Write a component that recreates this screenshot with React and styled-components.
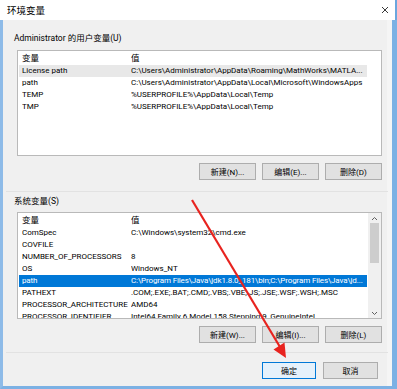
import React from "react";
import styled, { createGlobalStyle } from "styled-components";

const Global = createGlobalStyle`
  html, body { margin: 0; padding: 0; background: #fff; }
  body { font-family: Roboto, "Noto Sans CJK SC", sans-serif; }
`;

const FONT = `Roboto, "Noto Sans CJK SC", sans-serif`;

const Screen = styled.div`
  position: relative;
  width: 397px;
  height: 389px;
  overflow: hidden;
  background: #fff;
  display: flex;
  flex-direction: column;
  font-family: ${FONT};
  color: #000;
`;

const TitleBar = styled.div`
  height: 20px;
  flex: none;
  display: flex;
  align-items: center;
  justify-content: space-between;
  padding: 0 6px 0 7px;
  background: #fff;
  border-right: 2px solid #6aa6de;
  font-size: 9.5px;
`;

const Frame = styled.div`
  flex: 1;
  display: flex;
  border-left: 3px solid #8ebbe8;
  border-right: 5px solid #7cb1e4;
  border-bottom: 3px solid #7cb1e4;
`;

const Body = styled.div`
  flex: 1;
  background: #f0f0f0;
  padding: 12px 5px 0 14px;
  display: flex;
  flex-direction: column;
  border-right: 5px solid #f5f5f5;
`;

const GroupLabel = styled.div`
  height: 12px;
  line-height: 12px;
  font-size: 8.5px;
  margin-left: -3px;
  margin-top: ${(p) => p.$top || 0}px;
`;

const ListBox = styled.div`
  margin-top: ${(p) => p.$top}px;
  height: ${(p) => p.$h}px;
  background: #fff;
  border: 1px solid #b9b9b9;
  display: flex;
  overflow: hidden;
  font-size: 8px;
`;

const ListInner = styled.div`
  flex: 1;
  padding: 0 1px;
  display: flex;
  flex-direction: column;
  overflow: hidden;
`;

const Row = styled.div`
  flex: none;
  display: grid;
  grid-template-columns: 109px 1fr;
  height: ${(p) => (p.$head ? 14 : 12)}px;
  line-height: ${(p) => (p.$head ? 14 : 12)}px;
  padding-left: 3px;
  margin-right: ${(p) => (p.$scroll ? 0 : 13)}px;
  white-space: nowrap;
  overflow: hidden;
  letter-spacing: ${(p) => (p.$sel ? "-0.13px" : "normal")};
  background: ${(p) => (p.$sel ? "#0078d7" : p.$hover ? "#e8e8e8" : "transparent")};
  color: ${(p) => (p.$sel ? "#fff" : "#000")};
  font-size: ${(p) => (p.$head ? "8.5px" : "inherit")};
`;

const Cell = styled.span`
  overflow: hidden;
`;

const ScrollBar = styled.div`
  width: 13px;
  flex: none;
  background: #f0f0f0;
  display: flex;
  flex-direction: column;
  align-items: center;
`;

const ScrollArrow = styled.div`
  height: 10px;
  width: 13px;
  display: flex;
  align-items: center;
  justify-content: center;
`;

const Thumb = styled.div`
  width: 9px;
  height: 40px;
  background: #cdcdcd;
`;

const Spacer = styled.div`
  flex: 1;
`;

const ButtonRow = styled.div`
  margin-top: ${(p) => p.$top}px;
  display: flex;
  justify-content: flex-end;
  gap: ${(p) => p.$gap || 6}px;
  padding-right: ${(p) => p.$pr || 0}px;
`;

const Button = styled.div`
  width: ${(p) => p.$w || 55}px;
  height: 15px;
  display: flex;
  align-items: center;
  justify-content: center;
  font-size: 8px;
  background: ${(p) => (p.$default ? "#e5f1fb" : "#e1e1e1")};
  border: 1px solid ${(p) => (p.$default ? "#0078d7" : "#adadad")};
  box-sizing: content-box;
`;

const Separator = styled.div`
  height: 1px;
  background: #e2e2e2;
  margin: ${(p) => p.$top}px -6px 0 -11px;
`;

const Overlay = styled.svg`
  position: absolute;
  left: 0;
  top: 0;
  pointer-events: none;
`;

const userVars = [
  ["License path", "C:\\Users\\Administrator\\AppData\\Roaming\\MathWorks\\MATLA...", true],
  ["path", "C:\\Users\\Administrator\\AppData\\Local\\Microsoft\\WindowsApps"],
  ["TEMP", "%USERPROFILE%\\AppData\\Local\\Temp"],
  ["TMP", "%USERPROFILE%\\AppData\\Local\\Temp"],
];

const sysVars = [
  ["ComSpec", "C:\\Windows\\system32\\cmd.exe"],
  ["COVFILE", ""],
  ["NUMBER_OF_PROCESSORS", "8"],
  ["OS", "Windows_NT"],
  ["path", "C:\\Program Files\\Java\\jdk1.8.0_181\\bin;C:\\Program Files\\Java\\jd...", true],
  ["PATHEXT", ".COM;.EXE;.BAT;.CMD;.VBS;.VBE;.JS;.JSE;.WSF;.WSH;.MSC"],
  ["PROCESSOR_ARCHITECTURE", "AMD64"],
  ["PROCESSOR_IDENTIFIER", "Intel64 Family 6 Model 158 Stepping 9, GenuineIntel"],
];

export default function App() {
  return (
    <>
      <Global />
      <Screen>
        <TitleBar>
          <span>环境变量</span>
          <svg width="8" height="8" viewBox="0 0 8 8">
            <path d="M1 1 L7 7 M7 1 L1 7" stroke="#222" strokeWidth="0.9" />
          </svg>
        </TitleBar>
        <Frame>
          <Body>
            <GroupLabel>Administrator 的用户变量(U)</GroupLabel>
            <ListBox $top={6} $h={104}>
              <ListInner>
                <Row $head>
                  <Cell>变量</Cell>
                  <Cell>值</Cell>
                </Row>
                {userVars.map(([k, v, h]) => (
                  <Row key={k} $hover={h}>
                    <Cell>{k}</Cell>
                    <Cell>{v}</Cell>
                  </Row>
                ))}
              </ListInner>
            </ListBox>
            <ButtonRow $top={7}>
              <Button $w={55}>新建(N)...</Button>
              <Button>编辑(E)...</Button>
              <Button>删除(D)</Button>
            </ButtonRow>
            <Separator $top={11} />
            <GroupLabel $top={3}>系统变量(S)</GroupLabel>
            <ListBox $top={5} $h={105}>
              <ListInner>
                <Row $head $scroll>
                  <Cell>变量</Cell>
                  <Cell>值</Cell>
                </Row>
                {sysVars.map(([k, v, s]) => (
                  <Row key={k} $sel={s} $scroll>
                    <Cell>{k}</Cell>
                    <Cell>{v}</Cell>
                  </Row>
                ))}
              </ListInner>
              <ScrollBar>
                <ScrollArrow>
                  <svg width="7" height="5" viewBox="0 0 7 5">
                    <path d="M1 4 L3.5 1.5 L6 4" stroke="#606060" fill="none" strokeWidth="1" />
                  </svg>
                </ScrollArrow>
                <Thumb />
                <Spacer />
                <ScrollArrow>
                  <svg width="7" height="5" viewBox="0 0 7 5">
                    <path d="M1 1 L3.5 3.5 L6 1" stroke="#606060" fill="none" strokeWidth="1" />
                  </svg>
                </ScrollArrow>
              </ScrollBar>
            </ListBox>
            <ButtonRow $top={7}>
              <Button $w={55}>新建(W)...</Button>
              <Button>编辑(I)...</Button>
              <Button>删除(L)</Button>
            </ButtonRow>
            <Separator $top={9} />
            <ButtonRow $top={9} $gap={7} $pr={4}>
              <Button $default $w={52}>确定</Button>
              <Button $w={53}>取消</Button>
            </ButtonRow>
          </Body>
        </Frame>
        <Overlay width="397" height="389" viewBox="0 0 397 389">
          <line x1="192" y1="200" x2="280" y2="347" stroke="#e8231f" strokeWidth="2.2" />
          <polygon points="286,358 284.5,342.5 273.5,349.5" fill="#e8231f" />
        </Overlay>
      </Screen>
    </>
  );
}
